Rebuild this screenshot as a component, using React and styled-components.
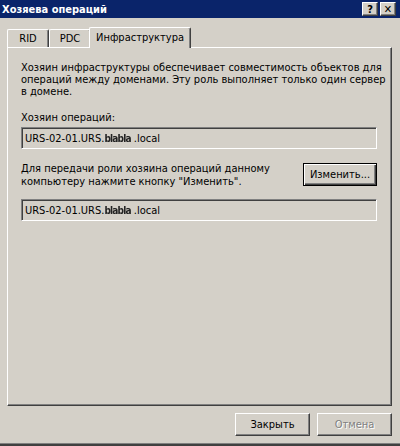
import React from 'react';
import styled, { createGlobalStyle } from 'styled-components';

const GlobalStyle = createGlobalStyle`
  html, body {
    margin: 0;
    padding: 0;
    background: #d4d0c8;
  }
  body {
    font-family: "DejaVu Sans Condensed", "Liberation Sans", sans-serif;
    font-size: 11px;
    color: #000;
  }
`;

const Window = styled.div`
  width: 400px;
  height: 446px;
  box-sizing: border-box;
  background: #d4d0c8;
  display: flex;
  flex-direction: column;
  border-bottom: 2px solid #404040;
  box-shadow: inset 0 -1px 0 #808080;
`;

const TitleBar = styled.div`
  height: 18px;
  background: #0a246a;
  display: flex;
  align-items: center;
  justify-content: space-between;
  padding: 0 4px 0 2px;
`;

const Title = styled.span`
  color: #fff;
  font-weight: bold;
  font-size: 11px;
`;

const Caption = styled.div`
  display: flex;
  gap: 2px;
`;

const CaptionButton = styled.div`
  width: 16px;
  height: 14px;
  box-sizing: border-box;
  background: #d4d0c8;
  border-top: 1px solid #fff;
  border-left: 1px solid #fff;
  border-right: 1px solid #404040;
  border-bottom: 1px solid #404040;
  box-shadow: inset -1px -1px 0 #808080;
  display: flex;
  align-items: center;
  justify-content: center;
  font-weight: bold;
  font-size: 11px;
  line-height: 1;
`;

const Body = styled.div`
  flex: 1;
  display: flex;
  flex-direction: column;
  padding: 9px 8px 0 7px;
`;

const TabStrip = styled.div`
  display: flex;
  align-items: flex-end;
  height: 21px;
  position: relative;
  z-index: 1;
  margin-bottom: -1px;
`;

const Tab = styled.div`
  box-sizing: border-box;
  height: ${p => (p.$active ? '21px' : '18px')};
  margin: ${p => (p.$active ? '0 -2px 0 -2px' : '0 0 1px 0')};
  width: ${p => p.$w}px;
  background: #d4d0c8;
  border-top: 1px solid #fff;
  border-left: 1px solid #fff;
  border-right: 1px solid #404040;
  box-shadow: inset -1px 0 0 #808080;
  border-radius: 2px 2px 0 0;
  display: flex;
  align-items: ${p => (p.$active ? 'flex-start' : 'center')};
  padding-top: ${p => (p.$active ? '3px' : '0')};
  justify-content: center;
  position: relative;
  z-index: ${p => (p.$active ? 2 : 1)};
`;

const Panel = styled.div`
  height: 359px;
  box-sizing: border-box;
  border-top: 1px solid #fff;
  border-left: 1px solid #fff;
  border-right: 1px solid #404040;
  border-bottom: 1px solid #404040;
  box-shadow: inset -1px -1px 0 #808080;
  padding: 14px 14px 0 13px;
  display: flex;
  flex-direction: column;
`;

const Text = styled.p`
  margin: 0;
  line-height: ${p => p.$lh || 12}px;
  white-space: nowrap;
`;

const Label = styled.div`
  margin-top: ${p => p.$top || 0}px;
  line-height: 12px;
`;

const Field = styled.div`
  height: 22px;
  box-sizing: border-box;
  margin-top: ${p => p.$top || 0}px;
  border-top: 1px solid #808080;
  border-left: 1px solid #808080;
  border-right: 1px solid #fff;
  border-bottom: 1px solid #fff;
  box-shadow: inset 1px 1px 0 #404040, inset -1px -1px 0 #d4d0c8;
  display: flex;
  align-items: center;
  padding-left: 3px;
  white-space: nowrap;
`;

const Masked = styled.span`
  font-weight: bold;
  font-size: 10px;
  letter-spacing: -0.8px;
  color: #222;
  filter: blur(0.5px);
  margin-right: 3px;
`;

const TransferRow = styled.div`
  display: flex;
  align-items: flex-start;
  justify-content: space-between;
  margin-top: 14px;
`;

const TransferText = styled(Text)`
  margin-top: -1px;
`;

const Button = styled.button`
  font: inherit;
  font-size: 11px;
  color: ${p => (p.disabled ? '#808080' : '#000')};
  text-shadow: ${p => (p.disabled ? '1px 1px 0 #fff' : 'none')};
  width: ${p => p.$w || 75}px;
  height: 23px;
  box-sizing: border-box;
  background: #d4d0c8;
  padding: 0;
  border-top: 1px solid #fff;
  border-left: 1px solid #fff;
  border-right: 1px solid #404040;
  border-bottom: 1px solid #404040;
  box-shadow: inset -1px -1px 0 #808080;
`;

const DefaultButton = styled(Button)`
  border: 1px solid #000;
  box-shadow: inset 1px 1px 0 #fff, inset -1px -1px 0 #404040, inset -2px -2px 0 #808080;
`;

const Footer = styled.div`
  display: flex;
  justify-content: flex-end;
  gap: 7px;
  padding: 7px 0 0 0;
`;

const HostValue = () => (
  <>
    URS-02-01.URS.<Masked>blabla</Masked>.local
  </>
);

export default function App() {
  return (
    <Window>
      <GlobalStyle />
      <TitleBar>
        <Title>Хозяева операций</Title>
        <Caption>
          <CaptionButton>?</CaptionButton>
          <CaptionButton>✕</CaptionButton>
        </Caption>
      </TitleBar>
      <Body>
        <TabStrip>
          <Tab $w={42}>RID</Tab>
          <Tab $w={42}>PDC</Tab>
          <Tab $w={102} $active>Инфраструктура</Tab>
        </TabStrip>
        <Panel>
          <Text>
            Хозяин инфраструктуры обеспечивает совместимость объектов для
            <br />
            операций между доменами. Эту роль выполняет только один сервер
            <br />
            в домене.
          </Text>
          <Label $top={14}>Хозяин операций:</Label>
          <Field $top={3}>
            <HostValue />
          </Field>
          <TransferRow>
            <TransferText $lh={13}>
              Для передачи роли хозяина операций данному
              <br />
              компьютеру нажмите кнопку "Изменить".
            </TransferText>
            <DefaultButton $w={74}>Изменить...</DefaultButton>
          </TransferRow>
          <Field $top={11}>
            <HostValue />
          </Field>
        </Panel>
        <Footer>
          <Button $w={75}>Закрыть</Button>
          <Button $w={75} disabled>
            Отмена
          </Button>
        </Footer>
      </Body>
    </Window>
  );
}
